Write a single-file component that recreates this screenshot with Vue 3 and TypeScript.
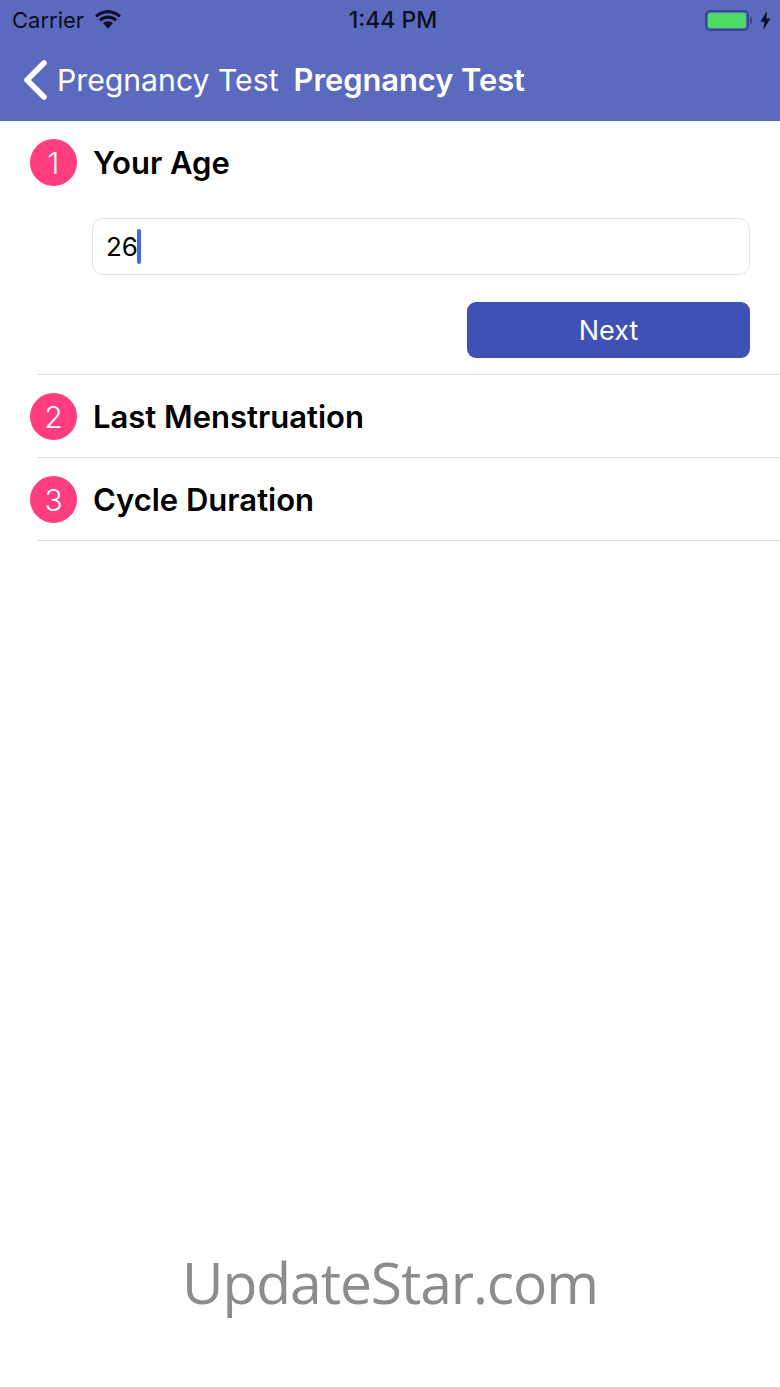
<script setup lang="ts">
interface Step {
  num: number
  title: string
}

const steps: Step[] = [
  { num: 1, title: 'Your Age' },
  { num: 2, title: 'Last Menstruation' },
  { num: 3, title: 'Cycle Duration' },
]
</script>

<template>
  <div class="page">
    <header class="header">
      <div class="status-bar">
        <div class="status-left">
          <span class="carrier">Carrier</span>
          <svg class="wifi" width="26" height="19" viewBox="0 0 26 19" aria-hidden="true">
            <path d="M13 3.2c4.2 0 8 1.6 10.9 4.3l1.9-2.2C22.400 2.100 17.900 0 13 0S3.600 2.100.2 5.300l1.900 2.200C5 4.800 8.800 3.200 13 3.200z" fill="#0c0f1f" />
            <path d="M13 8.800c2.700 0 5.100 1 7 2.700l2-2.300C19.500 7 16.400 5.600 13 5.600S6.500 7 4 9.200l2 2.300c1.900-1.700 4.300-2.700 7-2.700z" fill="#0c0f1f" />
            <path d="M13 11.200c-1.900 0-3.600.7-4.900 1.800l4.900 5.700 4.900-5.700c-1.300-1.100-3-1.800-4.900-1.800z" fill="#0c0f1f" />
          </svg>
        </div>
        <span class="clock">1:44 PM</span>
        <div class="status-right">
          <div class="battery"><div class="battery-fill" /></div>
          <div class="battery-tip" />
          <svg class="bolt" width="11" height="19" viewBox="0 0 11 19" aria-hidden="true">
            <path d="M7 0 .5 10.800h3.900L3.200 19l7.300-11.500H6.300L7 0z" fill="#0c0f1f" />
          </svg>
        </div>
      </div>
      <nav class="nav">
        <svg class="back" width="26" height="40" viewBox="0 0 26 40" aria-hidden="true">
          <path d="M21 3 4 20l17 17" fill="none" stroke="#fff" stroke-width="5.500" stroke-linecap="round" stroke-linejoin="round" />
        </svg>
        <span class="back-label">Pregnancy Test</span>
        <span class="nav-title">Pregnancy Test</span>
      </nav>
    </header>

    <main class="steps">
      <section v-for="step in steps" :key="step.num" class="step">
        <div class="step-head">
          <div class="step-num">{{ step.num }}</div>
          <div class="step-title">{{ step.title }}</div>
        </div>
        <div v-if="step.num === 1" class="step-body">
          <div class="field">
            <span class="field-value">26</span>
            <span class="caret" />
          </div>
          <button class="next-btn" type="button">Next</button>
        </div>
      </section>
    </main>

    <footer class="watermark">UpdateStar.com</footer>
  </div>
</template>

<style scoped>
.page {
  width: 780px;
  height: 1387px;
  display: flex;
  flex-direction: column;
  overflow: hidden;
  background: #fff;
  font-family: Inter, "Liberation Sans", sans-serif;
  color: #000;
}

/* header */
.header {
  height: 121px;
  background: #5b6abf;
  flex-shrink: 0;
}

.status-bar {
  height: 40px;
  display: grid;
  grid-template-columns: 1fr auto 1fr;
  align-items: center;
  padding: 0 9px 0 12px;
  color: #0c0f1f;
}

.status-left {
  display: flex;
  align-items: center;
  gap: 11px;
}

.carrier {
  font-size: 22px;
}

.wifi {
  margin-top: -2px;
}

.clock {
  padding-left: 3px;
  font-size: 23px;
  font-weight: 500;
}

.status-right {
  display: flex;
  align-items: center;
  justify-content: flex-end;
}

.battery {
  width: 44px;
  height: 21px;
  box-sizing: border-box;
  border: 2px solid #34468f;
  border-radius: 5px;
  padding: 1px;
}

.battery-fill {
  height: 100%;
  background: #4cd964;
  border-radius: 2px;
}

.battery-tip {
  width: 2px;
  height: 7px;
  margin-left: 1px;
  background: #34468f;
  border-radius: 0 2px 2px 0;
}

.bolt {
  margin-left: 8px;
}

.nav {
  height: 81px;
  display: flex;
  align-items: center;
  padding-left: 23px;
  color: #fff;
  padding-bottom: 2px;
  box-sizing: border-box;
}

.back {
  flex-shrink: 0;
}

.back-label {
  margin-left: 8px;
  font-size: 30.2px;
  font-weight: 400;
}

.nav-title {
  margin-left: 15px;
  font-size: 30.8px;
  font-weight: 600;
}

/* steps */
.step {
  position: relative;
  padding-top: 18px;
}

.step::after {
  content: "";
  display: block;
  height: 1px;
  margin: 17px 0 0 38px;
  background: #d9d9d9;
}

.step-head {
  display: flex;
  align-items: center;
  padding-left: 30px;
  gap: 16px;
}

.step-num {
  width: 47px;
  height: 47px;
  border-radius: 50%;
  background: #ff3d7f;
  color: #fff;
  font-size: 30px;
  font-weight: 300;
  display: flex;
  align-items: center;
  justify-content: center;
  flex-shrink: 0;
}

.step-title {
  font-size: 31px;
  font-weight: 600;
}

.step-body {
  padding: 32px 30px 0 92px;
  margin-bottom: -1px;
  display: flex;
  flex-direction: column;
  align-items: flex-end;
}

.field {
  width: 100%;
  height: 57px;
  box-sizing: border-box;
  border: 1px solid #e4e4e6;
  border-radius: 11px;
  padding-left: 13px;
  display: flex;
  align-items: center;
}

.field-value {
  font-size: 26px;
}

.caret {
  width: 4px;
  height: 35px;
  margin-left: -1px;
  background: #4169e1;
  border-radius: 2px;
}

.next-btn {
  width: 283px;
  height: 56px;
  margin-top: 27px;
  border: none;
  border-radius: 9px;
  background: #3f51b5;
  color: #fff;
  font-family: inherit;
  font-size: 27px;
  font-weight: 400;
  padding: 0;
}

/* watermark */
.watermark {
  margin-top: auto;
  padding-bottom: 69px;
  text-align: center;
  font-family: "Open Sans", "Noto Sans", sans-serif;
  font-size: 57px;
  letter-spacing: -1.1px;
  line-height: 72px;
  color: #8c8c8c;
}
</style>
